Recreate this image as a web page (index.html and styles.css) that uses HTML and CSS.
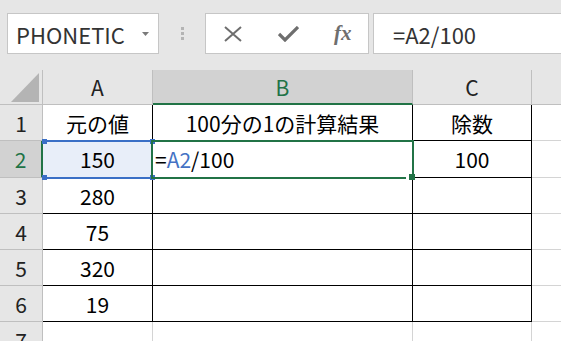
FILE: index.html
```html
<!DOCTYPE html>
<html>
  <head>
    <meta charset="utf-8" />
    <title>Excel</title>
    <link rel="stylesheet" href="styles.css">
  </head>
  <body>
    <div class="toolbar">
      <div class="name-box">
        <span>PHONETIC</span>
        <svg class="caret" viewBox="0 0 7 4"><path d="M0 0h7L3.5 4z" /></svg>
      </div>
      <div class="grip"><i></i><i></i><i></i></div>
      <div class="fx-buttons">
        <svg class="icon-x" viewBox="0 0 18 16">
          <path d="M1 1l16 14M17 1L1 15" />
        </svg>
        <svg class="icon-check" viewBox="0 0 21 16">
          <path d="M1 8l6 6L20 1" />
        </svg>
        <span class="fx">fx</span>
      </div>
      <div class="formula">=A2/100</div>
    </div>

    <div class="sheet">
      <div class="hd corner">
        <svg viewBox="0 0 42 34"><path d="M11 32L39 3v29z" /></svg>
      </div>
      <div class="hd">A</div>
      <div class="hd active-col">B</div>
      <div class="hd">C</div>
      <div class="hd"></div>

      <div class="hd row-num">1</div>
      <div class="cell">元の値</div>
      <div class="cell">100分の1の計算結果</div>
      <div class="cell">除数</div>
      <div class="cell empty"></div>

      <div class="hd row-num active-row">2</div>
      <div class="cell picked">150</div>
      <div class="cell left">=<span class="ref">A2</span>/100</div>
      <div class="cell">100</div>
      <div class="cell empty"></div>

      <div class="hd row-num">3</div>
      <div class="cell">280</div>
      <div class="cell"></div>
      <div class="cell"></div>
      <div class="cell empty"></div>

      <div class="hd row-num">4</div>
      <div class="cell">75</div>
      <div class="cell"></div>
      <div class="cell"></div>
      <div class="cell empty"></div>

      <div class="hd row-num">5</div>
      <div class="cell">320</div>
      <div class="cell"></div>
      <div class="cell"></div>
      <div class="cell empty"></div>

      <div class="hd row-num">6</div>
      <div class="cell">19</div>
      <div class="cell"></div>
      <div class="cell"></div>
      <div class="cell empty"></div>

      <div class="hd row-num">7</div>
      <div class="cell empty"></div>
      <div class="cell empty"></div>
      <div class="cell empty"></div>
      <div class="cell empty"></div>

      <div class="ref-box">
        <i class="handle tl"></i>
        <i class="handle tr"></i>
        <i class="handle bl"></i>
        <i class="handle br"></i>
      </div>
      <div class="edit-box"><i class="fill-handle"></i></div>
    </div>
  </body>
</html>
```

FILE: styles.css
```css
* {
  margin: 0;
  padding: 0;
  box-sizing: border-box;
}
body {
  width: 561px;
  height: 341px;
  overflow: hidden;
  background: #e6e6e6;
  font-family: "Noto Sans CJK JP", "Noto Sans", sans-serif;
  color: #000;
}
.toolbar {
  height: 70px;
  display: flex;
  align-items: flex-start;
  padding-top: 13px;
  padding-left: 7px;
}
.name-box {
  width: 152px;
  height: 41px;
  background: white;
  border: 1px solid #c6c6c6;
  display: flex;
  align-items: center;
  padding-left: 8px;
  padding-right: 9px;
  justify-content: space-between;
  font-size: 22px;
  color: #333;
}
.caret {
  width: 7px;
  height: 4px;
  fill: #7a7a7a;
}
.grip {
  width: 46px;
  height: 41px;
  display: flex;
  flex-direction: column;
  align-items: center;
  justify-content: center;
  gap: 2px;
}
.grip i {
  width: 3px;
  height: 3px;
  background: #b4b4b4;
}
.fx-buttons {
  width: 164px;
  height: 41px;
  background: white;
  border: 1px solid #c6c6c6;
  display: flex;
  align-items: center;
  padding-left: 18px;
}
.icon-x {
  width: 18px;
  height: 16px;
  stroke: #6e6e6e;
  stroke-width: 2;
  fill: none;
}
.icon-check {
  width: 21px;
  height: 16px;
  margin-left: 36px;
  stroke: #6e6e6e;
  stroke-width: 3.2;
  fill: none;
}
.fx {
  margin-left: 35px;
  font-family: "Liberation Serif", serif;
  font-style: italic;
  font-weight: bold;
  font-size: 21px;
  color: #6e6e6e;
}
.formula {
  flex: 1;
  height: 41px;
  margin-left: 4px;
  background: white;
  border: 1px solid #c6c6c6;
  border-right: none;
  display: flex;
  align-items: center;
  padding-left: 19px;
  font-size: 22px;
  color: #333;
}
.sheet {
  position: relative;
  display: grid;
  grid-template-columns: 43px 110px 260px 119px 40px;
  grid-template-rows: 35px 36px 37px 36px 36px 36px 36px 36px;
  font-size: 21px;
}
.hd,
.cell {
  display: flex;
  align-items: center;
  justify-content: center;
  border-right: 1px solid #000;
  border-bottom: 1px solid #000;
  background: white;
  white-space: nowrap;
}
.hd {
  background: #e6e6e6;
  border-color: #bfbfbf;
  color: #222;
}
.corner svg {
  width: 42px;
  height: 34px;
  fill: #b4b4b4;
}
.hd.active-col {
  background: #d2d2d2;
  color: #217346;
  border-bottom: 2px solid #217346;
}
.hd.active-row {
  background: #d2d2d2;
  color: #217346;
  border-right: 2px solid #217346;
}
.cell.empty {
  border-color: #d4d4d4;
}
.cell.picked {
  background: #e8eef9;
}
.cell.left {
  justify-content: flex-start;
  padding-left: 2px;
}
.ref {
  color: #4472c4;
}
.ref-box {
  position: absolute;
  left: 43px;
  top: 70px;
  width: 109px;
  height: 39px;
  border-top: 2px solid #3a6fc6;
  border-bottom: 2px solid #3a6fc6;
}
.handle {
  position: absolute;
  width: 5px;
  height: 5px;
  background: #3a6fc6;
}
.handle.tl {
  left: -1px;
  top: -3px;
}
.handle.tr {
  right: -3px;
  top: -3px;
}
.handle.bl {
  left: -1px;
  bottom: -3px;
}
.handle.br {
  right: -3px;
  bottom: -3px;
}
.edit-box {
  position: absolute;
  left: 151px;
  top: 70px;
  width: 263px;
  height: 39px;
  border: 2px solid #217346;
}
.fill-handle {
  position: absolute;
  right: -3px;
  bottom: -3px;
  width: 9px;
  height: 6px;
  background: #217346;
  border-left: 3px solid white;
}
```
